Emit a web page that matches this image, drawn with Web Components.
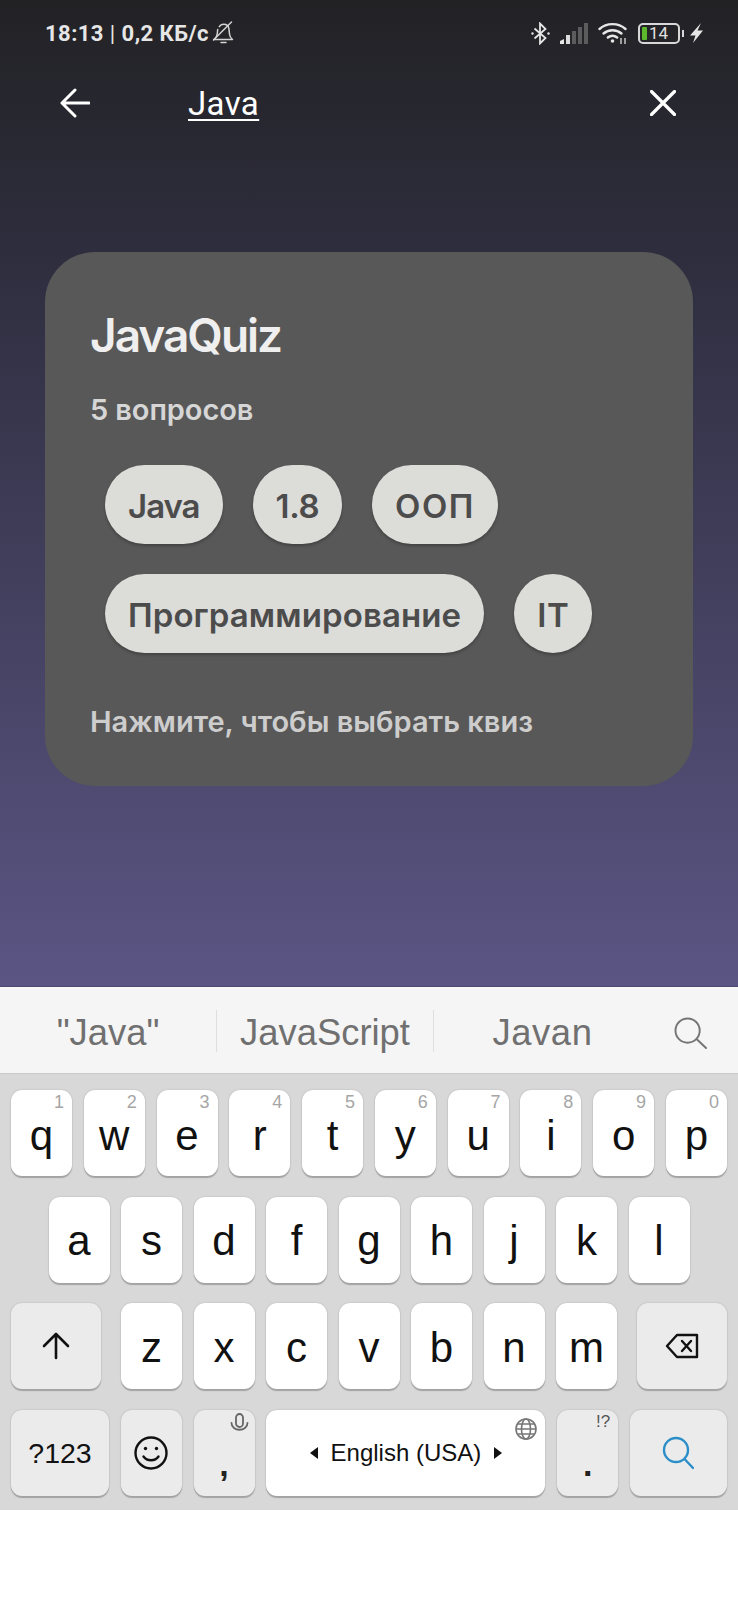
<!DOCTYPE html>
<html lang="ru">
<head>
<meta charset="utf-8">
<title>JavaQuiz</title>
<style>
  html, body { margin: 0; padding: 0; background: #fff; }
  body { width: 738px; height: 1600px; overflow: hidden; font-family: "Liberation Sans", sans-serif; }
</style>
</head>
<body>
  <quiz-screen>
    <status-bar></status-bar>
    <search-bar query="Java"></search-bar>
    <quiz-card title="JavaQuiz" count="5 вопросов" hint="Нажмите, чтобы выбрать квиз">
      <tag-chip style="letter-spacing:-1px">Java</tag-chip>
      <tag-chip style="letter-spacing:-0.4px">1.8</tag-chip>
      <tag-chip style="letter-spacing:1.5px">ООП</tag-chip>
      <tag-chip>Программирование</tag-chip>
      <tag-chip style="letter-spacing:0.6px">IT</tag-chip>
    </quiz-card>
  </quiz-screen>
  <suggest-bar></suggest-bar>
  <soft-keyboard></soft-keyboard>

<script>
class QuizScreen extends HTMLElement {
  constructor() {
    super();
    this.attachShadow({ mode: 'open' });
    this.shadowRoot.innerHTML = `
      <style>
        :host {
          display: block;
          height: 987px;
          box-sizing: border-box;
          background: linear-gradient(180deg, #222225 0%, #2e2d3d 25%, #5b5584 100%);
          border-bottom: 1px solid #4d4870;
        }
      </style>
      <slot></slot>
    `;
  }
}

class StatusBar extends HTMLElement {
  constructor() {
    super();
    this.attachShadow({ mode: 'open' });
    this.shadowRoot.innerHTML = `
      <style>
        :host {
          display: flex;
          align-items: center;
          justify-content: space-between;
          height: 66px;
          padding: 0 35px 0 45px;
          color: #e6e6e6;
          font-family: Roboto, sans-serif;
        }
        .left, .right { display: flex; align-items: center; }
        .time { font-size: 22px; font-weight: 700; letter-spacing: 0.45px; white-space: nowrap; }
        .thin { font-weight: 400; }
        .bell { margin-left: 3px; }
        .bt { margin-right: 10px; }
        .sig { margin-right: 10px; }
        .wifi { margin-right: 10px; }
        .bolt { margin-left: 6px; }
        .batt {
          position: relative;
          box-sizing: border-box;
          width: 42px;
          height: 21px;
          border: 2px solid #d8d8d8;
          border-radius: 5px;
          display: flex;
          align-items: center;
          padding-left: 2px;
          font-size: 17px;
          color: #e0e0e0;
          line-height: 1;
        }
        .batt i { display: block; width: 5px; height: 13px; background: #5cb82a; border-radius: 1px; margin-right: 2px; }
        .nub { width: 2px; height: 7px; background: #d8d8d8; margin-left: 2px; }
      </style>
      <div class="left">
        <span class="time">18:13 <span class="thin">|</span> 0,2 КБ/с</span>
        <svg class="bell" width="22" height="24" viewBox="0 0 22 24" fill="none" stroke="#d4d4d4" stroke-width="1.5" stroke-linecap="round" stroke-linejoin="round">
          <path d="M2 18.5h18.5c-2-1.6-2.8-3.2-3-5.5l-.6-5.5c-.4-2.6-2.7-4.3-5.2-4.3-2 0-3.6 1-4.4 2.5"/>
          <path d="M5.7 8.5 5.2 13c-.3 2.4-1.3 4-3.2 5.5"/>
          <path d="M1.5 19 19.5 1"/>
          <path d="M9 21.5h5"/>
        </svg>
      </div>
      <div class="right">
        <svg class="bt" width="19" height="23" viewBox="0 0 19 23" fill="none" stroke="#e6e6e6" stroke-width="1.8">
          <path d="M3.5 6.5 14.5 16 9 21.5v-20L14.5 7 3.5 16.5"/>
          <circle cx="1.5" cy="11.5" r="1.2" fill="#e6e6e6" stroke="none"/>
          <circle cx="17.5" cy="11.5" r="1.2" fill="#e6e6e6" stroke="none"/>
        </svg>
        <svg class="sig" width="28" height="21" viewBox="0 0 28 21">
          <path d="M0 21v-3l4-2v5z" fill="#e6e6e6"/>
          <rect x="6" y="12" width="4" height="9" fill="#dcdcdc"/>
          <rect x="12" y="8" width="4" height="13" fill="#5c5c5e"/>
          <rect x="18" y="4" width="4" height="17" fill="#5c5c5e"/>
          <rect x="24" y="0" width="4" height="21" fill="#5c5c5e"/>
        </svg>
        <svg class="wifi" width="30" height="22" viewBox="0 0 30 22" fill="none" stroke="#e6e6e6" stroke-width="2.4" stroke-linecap="round">
          <path d="M1.5 7C8.5 .5 20.5 .5 27.5 7"/>
          <path d="M5.5 11.5c5-4.4 13-4.4 18 0"/>
          <path d="M9.8 15.5c2.8-2.2 6.6-2.2 9.4 0"/>
          <circle cx="14.5" cy="19" r="1.8" fill="#e6e6e6" stroke="none"/>
          <path d="M23 16v6M27 16v6" stroke-width="1.6" stroke="#bdbdbd" stroke-linecap="butt"/>
        </svg>
        <div class="batt"><i></i>14</div>
        <div class="nub"></div>
        <svg class="bolt" width="13" height="20" viewBox="0 0 13 20"><path d="M11 0 0 12.5h5.5L3 20 13 7.5H7.5z" fill="#e6e6e6"/></svg>
      </div>
    `;
  }
}

class SearchBar extends HTMLElement {
  constructor() {
    super();
    this.attachShadow({ mode: 'open' });
    const query = this.getAttribute('query') || '';
    this.shadowRoot.innerHTML = `
      <style>
        :host {
          display: flex;
          align-items: center;
          height: 74px;
          padding: 0 62px 0 60px;
          color: #fff;
        }
        .query {
          flex: 1;
          margin-left: 98px;
          font-family: Roboto, sans-serif;
          font-size: 33px;
          letter-spacing: 0.4px;
          text-decoration: underline;
          text-decoration-thickness: 2px;
          text-underline-offset: 4px;
        }
        svg { display: block; }
      </style>
      <svg width="30" height="30" viewBox="0 0 30 30" fill="none" stroke="#fff" stroke-width="3" stroke-linecap="round" stroke-linejoin="round">
        <path d="M29 15H2M15 2 2 15l13 13"/>
      </svg>
      <span class="query">${query}</span>
      <svg width="26" height="26" viewBox="0 0 26 26" fill="none" stroke="#fff" stroke-width="3.2" stroke-linecap="round">
        <path d="M1.5 1.5l23 23M24.5 1.5l-23 23"/>
      </svg>
    `;
  }
}

class QuizCard extends HTMLElement {
  constructor() {
    super();
    this.attachShadow({ mode: 'open' });
    this.shadowRoot.innerHTML = `
      <style>
        :host {
          display: block;
          box-sizing: border-box;
          width: 648px;
          margin: 112px 0 0 45px;
          padding: 55px 45px 44px;
          background: #585858;
          border-radius: 50px;
          font-family: Inter, sans-serif;
        }
        .title { font-size: 46px; line-height: 56px; font-weight: 600; color: #efefef; letter-spacing: -2px; }
        .count { margin-top: 27px; font-size: 29px; line-height: 40px; font-weight: 600; color: #d6d6d6; letter-spacing: -0.1px; }
        .chips { display: flex; flex-wrap: wrap; gap: 30px; margin: 35px 0 0 15px; }
        .hint { margin-top: 49px; font-size: 29px; line-height: 40px; font-weight: 600; color: #cdcdcd; }
      </style>
      <div class="title">${this.getAttribute('title')}</div>
      <div class="count">${this.getAttribute('count')}</div>
      <div class="chips"><slot></slot></div>
      <div class="hint">${this.getAttribute('hint')}</div>
    `;
  }
}

class TagChip extends HTMLElement {
  constructor() {
    super();
    this.attachShadow({ mode: 'open' });
    this.shadowRoot.innerHTML = `
      <style>
        :host {
          display: flex;
          align-items: center;
          box-sizing: border-box;
          height: 79px;
          padding: 3px 23px 0;
          background: #dcdcd9;
          border-radius: 40px;
          box-shadow: 0 2px 3px rgba(0,0,0,0.25);
          color: #4c4c4c;
          font-family: Inter, sans-serif;
          font-size: 33px;
          font-weight: 600;
          letter-spacing: 0.1px;
        }
      </style>
      <slot></slot>
    `;
  }
}

class SuggestBar extends HTMLElement {
  constructor() {
    super();
    this.attachShadow({ mode: 'open' });
    this.shadowRoot.innerHTML = `
      <style>
        :host {
          display: flex;
          align-items: center;
          box-sizing: border-box;
          height: 87px;
          background: #f5f5f5;
          border-top: 1px solid #fafafa;
          border-bottom: 1px solid #c9c9c9;
          color: #707070;
          font-size: 36.4px;
        }
        .cell { display: flex; align-items: center; justify-content: center; box-sizing: border-box; height: 42px; padding-top: 4px; }
        .sep { border-right: 1px solid #dedede; }
        .a { width: 217px; }
        .b { width: 217px; }
        .c { width: 217px; letter-spacing: 0.6px; }
        .d { flex: 1; padding-right: 9px; }
      </style>
      <div class="cell a sep">"Java"</div>
      <div class="cell b sep">JavaScript</div>
      <div class="cell c">Javan</div>
      <div class="cell d">
        <svg width="33" height="32" viewBox="0 0 34 33" fill="none" stroke="#757575" stroke-width="2" stroke-linecap="round">
          <circle cx="14" cy="14" r="12.5"/><path d="M23.5 23 33 32"/>
        </svg>
      </div>
    `;
  }
}

class KbKey extends HTMLElement {
  constructor() {
    super();
    this.attachShadow({ mode: 'open' });
    const hint = this.getAttribute('hint');
    this.shadowRoot.innerHTML = `
      <style>
        :host {
          position: relative;
          display: flex;
          align-items: center;
          justify-content: center;
          box-sizing: border-box;
          flex: none;
          width: var(--w, 61px);
          height: 86px;
          padding-top: var(--drop, 0);
          background: #fff;
          border-radius: 11px;
          box-shadow: 0 1.5px 1px #a3a3a3, 0 0 1.5px #a8a8a8;
          color: #111;
          font-size: 42px;
          line-height: 1;
        }
        :host([fn]) { background: #ebebeb; }
        .hint {
          position: absolute;
          top: var(--hint-top, 3px);
          right: 8px;
          font-size: var(--hint-size, 18px);
          color: var(--hint-color, #a6a6a6);
        }
      </style>
      ${hint ? `<span class="hint">${hint}</span>` : ''}
      <slot></slot>
    `;
  }
}

class SoftKeyboard extends HTMLElement {
  constructor() {
    super();
    this.attachShadow({ mode: 'open' });
    const row1 = [['q',1],['w',2],['e',3],['r',4],['t',5],['y',6],['u',7],['i',8],['o',9],['p',0]];
    const letters = s => [...s].map(c => `<kb-key>${c}</kb-key>`).join('');
    this.shadowRoot.innerHTML = `
      <style>
        :host {
          display: flex;
          flex-direction: column;
          gap: 20.7px;
          box-sizing: border-box;
          height: 436px;
          padding: 16px 11px 0;
          background: #d8d8d8;
        }
        .row { display: flex; justify-content: space-between; }
        .row1 { --drop: 6px; }
        .home { justify-content: center; gap: 11.5px; --drop: 3px; }
        .row3 kb-key[fn] { --w: 90px; }
        .group { display: flex; gap: 11.5px; --drop: 4px; }
        .small { font-size: 28.5px; }
        .mid { font-size: 24px; display: flex; align-items: center; gap: 13px; white-space: nowrap; }
        .tri-l { width: 0; height: 0; border: 6px solid transparent; border-left: 0; border-right: 8px solid #111; }
        .tri-r { width: 0; height: 0; border: 6px solid transparent; border-right: 0; border-left: 8px solid #111; }
        .punct { font-size: 34px; font-weight: 700; margin-top: 22px; line-height: 1; color: #222; }
        .corner { position: absolute; }
        svg { display: block; }
      </style>
      <div class="row row1">
        ${row1.map(([c, n]) => `<kb-key hint="${n}">${c}</kb-key>`).join('')}
      </div>
      <div class="row home">${letters('asdfghjkl')}</div>
      <div class="row row3">
        <kb-key fn>
          <svg width="28" height="28" viewBox="0 0 28 28" fill="none" stroke="#111" stroke-width="2.6" stroke-linecap="round" stroke-linejoin="round"><path d="M14 26V3M2 14 14 2l12 12"/></svg>
        </kb-key>
        <div class="group">${letters('zxcvbnm')}</div>
        <kb-key fn>
          <svg width="34" height="26" viewBox="0 0 34 26" fill="none" stroke="#111" stroke-width="2.4" stroke-linejoin="round" stroke-linecap="round"><path d="M12 2h20v22H12L2 13z"/><path d="M17 8l9 10M26 8l-9 10"/></svg>
        </kb-key>
      </div>
      <div class="row">
        <kb-key fn style="--w:98px"><span class="small">?123</span></kb-key>
        <kb-key fn>
          <svg width="34" height="34" viewBox="0 0 34 34" fill="none" stroke="#111" stroke-width="2.4" stroke-linecap="round"><circle cx="17" cy="17" r="15.5"/><path d="M9.5 20.5c3.5 5 11.5 5 15 0"/><circle cx="11.5" cy="12.5" r="1.7" fill="#111" stroke="none"/><circle cx="22.5" cy="12.5" r="1.7" fill="#111" stroke="none"/></svg>
        </kb-key>
        <kb-key fn>
          <span class="punct">,</span>
          <svg class="corner" style="top:3px;right:6px" width="19" height="21" viewBox="0 0 19 21" fill="none" stroke="#666" stroke-width="1.8" stroke-linecap="round"><rect x="6" y="1" width="7" height="13" rx="3.5"/><path d="M1.5 10c0 9 16 9 16 0"/></svg>
        </kb-key>
        <kb-key style="--w:279px">
          <span class="mid"><i class="tri-l"></i>English (USA)<i class="tri-r"></i></span>
          <svg class="corner" style="top:8px;right:8px" width="22" height="22" viewBox="0 0 22 22" fill="none" stroke="#777" stroke-width="1.6"><circle cx="11" cy="11" r="10"/><ellipse cx="11" cy="11" rx="4.5" ry="10"/><path d="M1 11h20M2.5 6h17M2.5 16h17"/></svg>
        </kb-key>
        <kb-key fn hint="!?" style="--hint-color:#555;--hint-size:17px;--hint-top:3px">
          <span class="punct">.</span>
        </kb-key>
        <kb-key fn style="--w:97px">
          <svg width="32" height="34" viewBox="0 0 32 34" fill="none" stroke="#2a8ec8" stroke-width="2.4" stroke-linecap="round"><circle cx="14" cy="14" r="12"/><path d="M23 23.5 31 32"/></svg>
        </kb-key>
      </div>
    `;
  }
}

customElements.define('quiz-screen', QuizScreen);
customElements.define('status-bar', StatusBar);
customElements.define('search-bar', SearchBar);
customElements.define('quiz-card', QuizCard);
customElements.define('tag-chip', TagChip);
customElements.define('suggest-bar', SuggestBar);
customElements.define('kb-key', KbKey);
customElements.define('soft-keyboard', SoftKeyboard);
</script>
</body>
</html>
